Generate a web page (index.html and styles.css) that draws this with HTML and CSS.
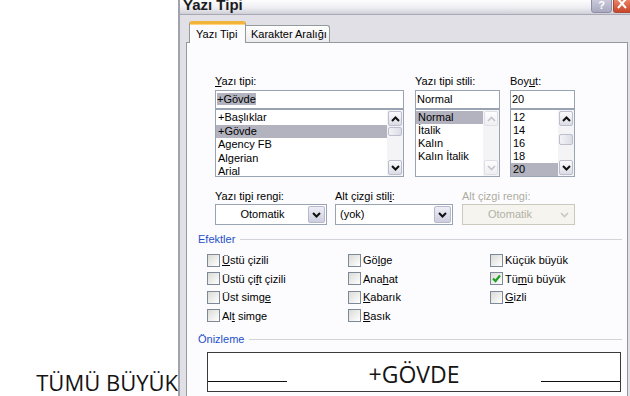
FILE: index.html
```html
<!DOCTYPE html>
<html lang="tr">
<head>
<meta charset="utf-8">
<title>Yazı Tipi</title>
<link rel="stylesheet" href="styles.css">
</head>
<body>
<div class="screen">
  <div class="doc"><span class="doc-text">TÜMÜ BÜYÜK</span></div>
  <div class="dialog">
    <div class="titlebar">
      <span class="title">Yazı Tipi</span>
      <div class="tb-buttons">
        <span class="btn-help">?</span>
        <span class="btn-close"><svg width="12" height="10" viewBox="0 0 12 10"><path d="M2 -1 L10 8 M10 -1 L2 8" stroke="#fff" stroke-width="2" fill="none"/></svg></span>
      </div>
    </div>
    <div class="frame">
      <div class="tabs">
        <div class="tab tab-active">Yazı Tipi</div>
        <div class="tab tab-inactive">Karakter Aralığı</div>
      </div>
      <div class="panel">
        <div class="font-row">
          <div class="col col-font">
            <div class="lbl"><u>Y</u>azı tipi:</div>
            <div class="input"><span class="sel-text">+Gövde</span></div>
            <div class="list">
              <div class="items items-font">
                <div class="item">+Başlıklar</div>
                <div class="item selected">+Gövde</div>
                <div class="item">Agency FB</div>
                <div class="item">Algerian</div>
                <div class="item">Arial</div>
              </div>
              <div class="sb">
                <div class="sb-btn"><svg width="11" height="8" viewBox="0 0 11 8"><polyline points="2,6 5.5,2.5 9,6" stroke="#111" stroke-width="2" fill="none"/></svg></div>
                <div class="sb-thumb thumb-font"></div>
                <div class="sb-fill"></div>
                <div class="sb-btn"><svg width="11" height="8" viewBox="0 0 11 8"><polyline points="2,2 5.5,5.5 9,2" stroke="#111" stroke-width="2" fill="none"/></svg></div>
              </div>
            </div>
          </div>
          <div class="col col-style">
            <div class="lbl">Yazı tipi stili:</div>
            <div class="input">Normal</div>
            <div class="list">
              <div class="items">
                <div class="item selected">Normal</div>
                <div class="item">İtalik</div>
                <div class="item">Kalın</div>
                <div class="item">Kalın İtalik</div>
              </div>
              <div class="sb sb-disabled">
                <div class="sb-btn"><svg width="11" height="8" viewBox="0 0 11 8"><polyline points="2,6 5.5,2.5 9,6" stroke="#c4c4cc" stroke-width="1.6" fill="none"/></svg></div>
                <div class="sb-fill"></div>
                <div class="sb-btn"><svg width="11" height="8" viewBox="0 0 11 8"><polyline points="2,2 5.5,5.5 9,2" stroke="#c4c4cc" stroke-width="1.6" fill="none"/></svg></div>
              </div>
            </div>
          </div>
          <div class="col col-size">
            <div class="lbl">Boy<u>u</u>t:</div>
            <div class="input">20</div>
            <div class="list">
              <div class="items">
                <div class="item">12</div>
                <div class="item">14</div>
                <div class="item">16</div>
                <div class="item">18</div>
                <div class="item selected">20</div>
              </div>
              <div class="sb">
                <div class="sb-btn"><svg width="11" height="8" viewBox="0 0 11 8"><polyline points="2,6 5.5,2.5 9,6" stroke="#111" stroke-width="2" fill="none"/></svg></div>
                <div class="sb-thumb thumb-size"></div>
                <div class="sb-fill"></div>
                <div class="sb-btn"><svg width="11" height="8" viewBox="0 0 11 8"><polyline points="2,2 5.5,5.5 9,2" stroke="#111" stroke-width="2" fill="none"/></svg></div>
              </div>
            </div>
          </div>
        </div>

        <div class="combo-row">
          <div class="ccol ccol-1">
            <div class="lbl lbl-tight">Yazı ti<u>p</u>i rengi:</div>
            <div class="combo">
              <span class="combo-text centered">Otomatik</span>
              <span class="dd-btn"><svg width="11" height="8" viewBox="0 0 11 8"><polyline points="2,2 5.5,5.5 9,2" stroke="#111" stroke-width="2" fill="none"/></svg></span>
            </div>
          </div>
          <div class="ccol ccol-2">
            <div class="lbl lbl-tight">Alt çizgi stil<u>i</u>:</div>
            <div class="combo">
              <span class="combo-text">(yok)</span>
              <span class="dd-btn"><svg width="11" height="8" viewBox="0 0 11 8"><polyline points="2,2 5.5,5.5 9,2" stroke="#111" stroke-width="2" fill="none"/></svg></span>
            </div>
          </div>
          <div class="ccol ccol-3">
            <div class="lbl lbl-tight disabled">Alt çizgi rengi:</div>
            <div class="combo combo-disabled">
              <span class="combo-text centered">Otomatik</span>
              <span class="dd-btn dd-disabled"><svg width="11" height="8" viewBox="0 0 11 8"><polyline points="2,2 5.5,5.5 9,2" stroke="#c8c8c0" stroke-width="1.6" fill="none"/></svg></span>
            </div>
          </div>
        </div>

        <div class="group">
          <div class="group-head head-effects"><span class="group-title">Efektler</span><span class="group-line"></span></div>
          <div class="checks">
            <div class="chk"><span class="box"></span><span><u>Ü</u>stü çizili</span></div>
            <div class="chk"><span class="box"></span><span>Gö<u>l</u>ge</span></div>
            <div class="chk"><span class="box"></span><span>Küçük büyük</span></div>
            <div class="chk"><span class="box"></span><span>Üstü çi<u>f</u>t çizili</span></div>
            <div class="chk"><span class="box"></span><span>Ana<u>h</u>at</span></div>
            <div class="chk"><span class="box checked"><svg width="11" height="11" viewBox="0 0 11 11"><polyline points="2,5.5 4.5,8 9,2.5" stroke="#21a121" stroke-width="2.2" fill="none"/></svg></span><span>Tü<u>m</u>ü büyük</span></div>
            <div class="chk"><span class="box"></span><span>Üst simg<u>e</u></span></div>
            <div class="chk"><span class="box"></span><span><u>K</u>abarık</span></div>
            <div class="chk"><span class="box"></span><span><u>G</u>izli</span></div>
            <div class="chk"><span class="box"></span><span>Al<u>t</u> simge</span></div>
            <div class="chk"><span class="box"></span><span><u>B</u>asık</span></div>
          </div>
          <div class="group-head head-preview"><span class="group-title">Önizleme</span><span class="group-line"></span></div>
          <div class="preview">
            <span class="pv-line pv-left"></span>
            <span class="pv-text">+GÖVDE</span>
            <span class="pv-line pv-right"></span>
          </div>
        </div>
      </div>
    </div>
  </div>
</div>
</body>
</html>
```

FILE: styles.css
```css
* { box-sizing: border-box; margin: 0; padding: 0; }
html, body { width: 630px; height: 396px; overflow: hidden; background: #fff; }
body { font-family: "Liberation Sans", Arial, sans-serif; font-size: 11px; color: #000; }
u { text-decoration: underline; text-underline-offset: 1px; }

.screen { display: flex; width: 630px; height: 396px; }

.doc {
  width: 178px; flex: none;
  display: flex; flex-direction: column; justify-content: flex-end; align-items: flex-end;
  padding-bottom: 3px;
}
.doc-text { font-family: "Open Sans", sans-serif; font-size: 22px; line-height: 22px; color: #141414; }

.dialog {
  flex: 1; display: flex; flex-direction: column;
  border-left: 2px solid #a2a2ae;
  background: #e1e0e6;
  min-width: 0;
}

.titlebar {
  height: 15px; flex: none;
  display: flex; justify-content: space-between; align-items: flex-start;
  background: linear-gradient(#fdfdfe, #eeeef2 55%, #cfcfd8);
  border-bottom: 1px solid #a9a9b6;
  overflow: hidden;
}
.title { font-weight: bold; font-size: 15px; line-height: 15px; margin-top: -3px; margin-left: 3px; color: #1b1b22; }
.tb-buttons { display: flex; align-items: flex-start; height: 14px; }
.btn-help {
  width: 21px; height: 14px; margin-top: -1px;
  background: linear-gradient(#c9c9da, #a9a9c0);
  border: 1px solid #8d8da6; border-radius: 0 0 3px 3px;
  color: #fff; font-weight: bold; font-size: 11px; line-height: 11px; text-align: center;
}
.btn-close {
  width: 17px; height: 14px; margin-left: 1px; margin-top: -1px;
  background: linear-gradient(#e98468, #c9452a);
  border: 1px solid #a84a38; border-right: none; border-radius: 0 0 0 3px;
  display: flex; justify-content: center; align-items: flex-start;
}

.frame { flex: 1; display: flex; flex-direction: column; padding: 6px 2px 0 6px; min-height: 0; }

.tabs { display: flex; height: 22px; margin-left: 3px; margin-bottom: -1px; position: relative; z-index: 1; }
.tab { border: 1px solid #919b9c; border-bottom: none; }
.tab-active {
  width: 57px; height: 22px;
  background: #fcfcfe;
  border-top: 3px solid #f4b43c;
  border-radius: 3px 3px 0 0;
  padding: 4px 0 0 6px; line-height: 13px;
  box-shadow: inset 0 1px 0 #ffd47a;
}
.tab-inactive {
  width: 84px; height: 17px; margin-top: 4px;
  background: linear-gradient(#ffffff, #ecebef);
  border-left: none;
  border-radius: 0 3px 0 0;
  padding: 2px 0 0 5px; line-height: 13px;
}

.panel {
  flex: 1; min-height: 0;
  border: 1px solid #919b9c; border-bottom: none;
  background: #fcfcfe;
  padding: 0 0 0 11px;
}

/* font row */
.font-row { display: flex; margin: 32px 0 0 17px; }
.col { display: flex; flex-direction: column; }
.col-font { width: 189px; }
.col-style { width: 85px; margin-left: 11px; }
.col-size { width: 65px; margin-left: 10px; }
.lbl { height: 13px; line-height: 13px; margin-bottom: 2px; white-space: nowrap; }
.lbl-tight { margin-bottom: 1px; }
.disabled { color: #aeaca0; }

.input {
  height: 19px; border: 1px solid #9aa3b2; background: #fff;
  padding: 0 1px; line-height: 17px; white-space: nowrap;
}
.sel-text { background: #b2b3bf; }

.list {
  height: 68px; border: 1px solid #9aa3b2; background: #fff;
  display: flex; overflow: hidden;
}
.items { flex: 1; padding-top: 1px; min-width: 0; }
.item { height: 13px; line-height: 13px; padding-left: 2px; white-space: nowrap; }
.items-font .item { height: 13.5px; line-height: 13.5px; }
.item.selected { background: #b2b3bf; }

.sb {
  width: 16px; flex: none;
  display: flex; flex-direction: column;
  background: #f4f4f7;
  padding: 1px 0;
}
.sb-btn {
  height: 15px; margin: 0 1px;
  border: 1px solid #bcbdcd; border-radius: 2px;
  background: linear-gradient(#fbfbfd, #dcdce6);
  display: flex; align-items: center; justify-content: center;
}
.sb-disabled .sb-btn { border-color: #dfdfe6; background: linear-gradient(#fdfdfe, #efeff3); }
.sb-thumb {
  height: 9px; margin: 0 1px;
  border: 1px solid #bcbdcd; border-radius: 2px;
  background: linear-gradient(90deg, #f2f2f6, #dcdce6);
}
.thumb-font { margin-top: 1px; }
.thumb-size { margin-top: 8px; height: 11px; }
.sb-fill { flex: 1; }

/* combo row */
.combo-row { display: flex; margin: 13px 0 0 17px; }
.ccol { display: flex; flex-direction: column; }
.ccol-1 { width: 112px; }
.ccol-2 { width: 118px; margin-left: 8px; }
.ccol-3 { width: 113px; margin-left: 9px; }
.combo {
  height: 21px; border: 1px solid #9aa3b2; background: #fff;
  display: flex; align-items: stretch; padding: 1px;
}
.combo-text { flex: 1; line-height: 17px; padding-left: 3px; white-space: nowrap; }
.combo-text.centered { text-align: center; padding-left: 0; }
.dd-btn {
  width: 17px; flex: none;
  border: 1px solid #b6b8cc; border-radius: 2px;
  background: linear-gradient(#eeeef6, #cdcede);
  display: flex; align-items: center; justify-content: center;
}
.combo-disabled { background: #f5f4ef; border-color: #cbc9bd; color: #b3b1a6; }
.dd-disabled { border-color: transparent; background: transparent; }

/* groups */
.group { padding-right: 5px; }
.group-head { display: flex; align-items: center; height: 14px; }
.head-effects { margin-top: 7px; }
.head-preview { margin-top: 7px; }
.group-title { color: #1f50c8; line-height: 14px; }
.group-line { flex: 1; height: 1px; background: #d3d3da; margin-left: 5px; }

.checks {
  display: grid; grid-template-columns: 141px 142px 1fr;
  grid-auto-rows: 18.5px;
  margin: 5px 0 0 9px;
}
.chk { display: flex; align-items: center; white-space: nowrap; }
.box {
  width: 13px; height: 13px; margin-right: 2px; flex: none;
  border: 1px solid #7d8899;
  background: linear-gradient(135deg, #dadad6, #ffffff);
  display: flex; align-items: center; justify-content: center;
}

.preview {
  height: 40px; margin: 6px 1px 0 9px;
  border: 1px solid #3a3a3a;
  display: flex; align-items: flex-start; justify-content: space-between;
  background: #fff;
}
.pv-line { width: 79px; height: 29px; border-bottom: 1px solid #111; }
.pv-text { font-family: "Open Sans", sans-serif; font-size: 23px; line-height: 23px; padding-top: 10px; color: #151515; }
```
